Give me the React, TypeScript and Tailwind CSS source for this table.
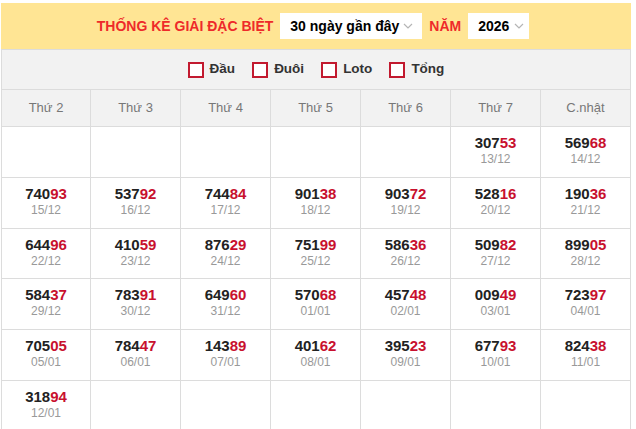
const days = ["Thứ 2", "Thứ 3", "Thứ 4", "Thứ 5", "Thứ 6", "Thứ 7", "C.nhật"];

type Cell = { num: string; date: string } | null;

const rows: Cell[][] = [
  [null, null, null, null, null, { num: "30753", date: "13/12" }, { num: "56968", date: "14/12" }],
  [
    { num: "74093", date: "15/12" },
    { num: "53792", date: "16/12" },
    { num: "74484", date: "17/12" },
    { num: "90138", date: "18/12" },
    { num: "90372", date: "19/12" },
    { num: "52816", date: "20/12" },
    { num: "19036", date: "21/12" },
  ],
  [
    { num: "64496", date: "22/12" },
    { num: "41059", date: "23/12" },
    { num: "87629", date: "24/12" },
    { num: "75199", date: "25/12" },
    { num: "58636", date: "26/12" },
    { num: "50982", date: "27/12" },
    { num: "89905", date: "28/12" },
  ],
  [
    { num: "58437", date: "29/12" },
    { num: "78391", date: "30/12" },
    { num: "64960", date: "31/12" },
    { num: "57068", date: "01/01" },
    { num: "45748", date: "02/01" },
    { num: "00949", date: "03/01" },
    { num: "72397", date: "04/01" },
  ],
  [
    { num: "70505", date: "05/01" },
    { num: "78447", date: "06/01" },
    { num: "14389", date: "07/01" },
    { num: "40162", date: "08/01" },
    { num: "39523", date: "09/01" },
    { num: "67793", date: "10/01" },
    { num: "82438", date: "11/01" },
  ],
  [{ num: "31894", date: "12/01" }, null, null, null, null, null, null],
];

const Chevron = () => (
  <svg width="10" height="6" viewBox="0 0 10 6">
    <polyline points="1,1 5,5 9,1" fill="none" stroke="#b5b5b5" strokeWidth="1.2" />
  </svg>
);

const Select = ({ label, cls }: { label: string; cls: string }) => (
  <div className={`flex h-[26px] items-center justify-between whitespace-nowrap bg-white pl-[10px] ${cls}`}>
    <span className="text-[14px] font-bold text-black">{label}</span>
    <Chevron />
  </div>
);

const Check = ({ label }: { label: string }) => (
  <div className="flex items-center">
    <span className="h-[16px] w-[16px] border-2 border-[#c21a2f] bg-white" />
    <span className="ml-[6px] text-[13.5px] font-bold text-[#333]">{label}</span>
  </div>
);

const App = () => {
  return (
    <div className="pl-px pt-[3px] font-['Liberation_Sans',Arial,sans-serif]">
      <div className="w-[630px]">
        {/* title bar */}
        <div className="flex h-[46px] items-center justify-center gap-[7px] bg-[#ffe594] pr-[6px]">
          <span className="text-[14px] font-bold text-[#ee2a2a]">THỐNG KÊ GIẢI ĐẶC BIỆT</span>
          <Select label="30 ngày gần đây" cls="w-[142px] pr-[9px]" />
          <span className="text-[14px] font-bold text-[#ee2a2a]">NĂM</span>
          <Select label="2026" cls="w-[61px] pr-[5px]" />
        </div>
        {/* filters */}
        <div className="flex h-[40px] items-center justify-center gap-[17px] border-x border-t border-[#dcdcdc] bg-[#f2f2f2]">
          <Check label="Đầu" />
          <Check label="Đuôi" />
          <Check label="Loto" />
          <Check label="Tổng" />
        </div>
        {/* calendar */}
        <div className="grid grid-cols-[89px_repeat(6,90px)] border-l border-t border-[#dcdcdc]">
          {days.map((d) => (
            <div
              key={d}
              className="flex h-[37px] items-center justify-center border-b border-r border-[#dcdcdc] bg-[#f2f2f2] text-[13px] text-[#777]"
            >
              {d}
            </div>
          ))}
          {rows.map((row, r) =>
            row.map((c, i) => (
              <div
                key={`${r}-${i}`}
                className={`flex flex-col items-center justify-center border-b border-r border-[#dcdcdc] bg-white pb-[3px] ${r === 2 ? "h-[50px]" : "h-[51px]"}`}
              >
                {c && (
                  <>
                    <span className="text-[15px] font-bold leading-[17px] text-[#222]">
                      {c.num.slice(0, 3)}
                      <span className="text-[#c8102e]">{c.num.slice(3)}</span>
                    </span>
                    <span className="mt-px text-[12px] leading-[15px] text-[#999]">{c.date}</span>
                  </>
                )}
              </div>
            ))
          )}
        </div>
      </div>
    </div>
  );
};

export default App;
